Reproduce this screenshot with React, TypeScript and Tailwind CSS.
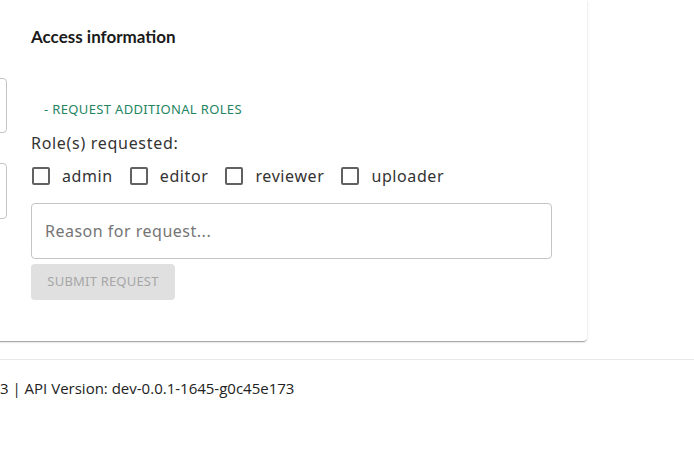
import React from "react";

const poppins = { fontFamily: '"Noto Sans", "Open Sans", sans-serif' };

function Check({ label }: { label: string }) {
  return (
    <label className="flex items-center">
      <span className="w-[18px] h-[18px] border-2 border-[#616161] rounded-[2px] box-border" />
      <span className="ml-[12px] text-[16px] text-[#333333] leading-[18px] tracking-[0.6px]">{label}</span>
    </label>
  );
}

export default function App() {
  return (
    <div className="w-[694px] h-[449px] bg-white overflow-hidden relative" style={poppins}>
      <div className="flex">
        <div className="ml-[-400px] w-[987px] shrink-0 bg-white rounded-b-[4px] shadow-[0_2px_1px_-1px_rgba(0,0,0,0.2),0_1px_1px_0_rgba(0,0,0,0.14),0_1px_3px_0_rgba(0,0,0,0.12)] flex h-[341px]">
          <div className="w-[407px] shrink-0 flex flex-col pt-[78px]">
            <div className="h-[55px] border border-[#c4c4c4] rounded-[4px]" />
            <div className="h-[56px] mt-[30px] border border-[#c4c4c4] rounded-[4px]" />
          </div>
          <div className="ml-[24px] w-[521px] pt-[27px]">
            <h2 className="text-[17px] font-bold text-[#1a1a1a] leading-[20px]" style={{ fontFamily: 'Lato, "Noto Sans", sans-serif' }}>
              Access information
            </h2>
            <div className="mt-[53px] ml-[13px] text-[13px] text-[#25855f] leading-[18px] tracking-[0.35px]">
              - REQUEST ADDITIONAL ROLES
            </div>
            <div className="mt-[15px] text-[16px] text-[#333333] leading-[20px] tracking-[0.7px]">Role(s) requested:</div>
            <div className="mt-[14px] flex items-center gap-[17px] pl-[1px]">
              <Check label="admin" />
              <Check label="editor" />
              <Check label="reviewer" />
              <Check label="uploader" />
            </div>
            <div className="mt-[18px] h-[56px] border border-[#c4c4c4] rounded-[4px] flex items-center px-[13px]">
              <span className="text-[16px] text-[#757575] tracking-[0.5px]">Reason for request...</span>
            </div>
            <div className="mt-[5px] w-[144px] h-[36px] bg-[#e0e0e0] rounded-[4px] flex items-center justify-center">
              <span className="text-[13px] text-[#a6a6a6] tracking-[0.2px]">SUBMIT REQUEST</span>
            </div>
          </div>
        </div>
      </div>
      <div className="mt-[18px] border-t border-[#e8e8e8] pt-[18px]">
        <div className="text-[15px] text-[#222222] leading-[20px]" style={{ fontFamily: '"Open Sans", sans-serif' }}>
          3 | API Version: dev-0.0.1-1645-g0c45e173
        </div>
      </div>
    </div>
  );
}
